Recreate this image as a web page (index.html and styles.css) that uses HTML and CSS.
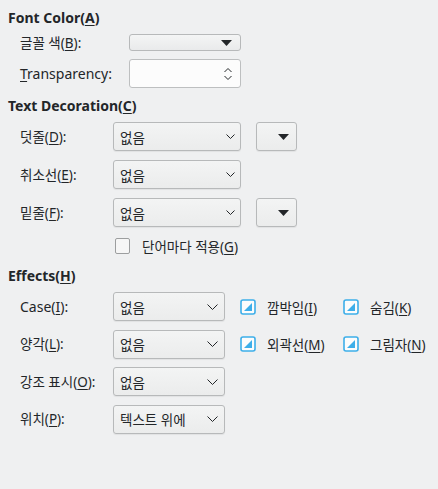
FILE: index.html
```html
<!DOCTYPE html>
<html lang="ko">
<head>
<meta charset="utf-8">
<link rel="stylesheet" href="styles.css">
</head>
<body>
<div class="page">
  <div class="title">Font Color(<u>A</u>)</div>
  <div class="grid grid-font">
    <div class="label ko">글꼴 색(<u>B</u>):</div>
    <div class="colorpick">
      <svg class="tri" width="11" height="6" viewBox="0 0 11 6"><polygon points="0,0 11,0 5.5,6" fill="#232629"/></svg>
    </div>
    <div class="label"><u>T</u>ransparency:</div>
    <div class="spin">
      <svg class="spinarrows" width="10" height="16" viewBox="0 0 10 16"><polyline points="1.5,6 5,2.5 8.5,6" fill="none" stroke="#232629" stroke-width="1"/><polyline points="1.5,10 5,13.5 8.5,10" fill="none" stroke="#232629" stroke-width="1"/></svg>
    </div>
  </div>

  <div class="title t2">Text Decoration(<u>C</u>)</div>
  <div class="grid grid-dec">
    <div class="label ko">덧줄(<u>D</u>):</div>
    <div class="combo wide ko"><span>없음</span><svg class="chev" width="9" height="5" viewBox="0 0 9 5"><polyline points="0.5,0.5 4.5,4.5 8.5,0.5" fill="none" stroke="#232629" stroke-width="1"/></svg></div>
    <div class="colorbtn"><svg width="11" height="6" viewBox="0 0 11 6"><polygon points="0,0 11,0 5.5,6" fill="#232629"/></svg></div>

    <div class="label ko">취소선(<u>E</u>):</div>
    <div class="combo wide ko"><span>없음</span><svg class="chev" width="9" height="5" viewBox="0 0 9 5"><polyline points="0.5,0.5 4.5,4.5 8.5,0.5" fill="none" stroke="#232629" stroke-width="1"/></svg></div>
    <div></div>

    <div class="label ko">밑줄(<u>F</u>):</div>
    <div class="combo wide ko"><span>없음</span><svg class="chev" width="9" height="5" viewBox="0 0 9 5"><polyline points="0.5,0.5 4.5,4.5 8.5,0.5" fill="none" stroke="#232629" stroke-width="1"/></svg></div>
    <div class="colorbtn"><svg width="11" height="6" viewBox="0 0 11 6"><polygon points="0,0 11,0 5.5,6" fill="#232629"/></svg></div>

    <div></div>
    <div class="check-row ko"><span class="box"></span><span>단어마다 적용(<u>G</u>)</span></div>
  </div>

  <div class="title t3">Effects(<u>H</u>)</div>
  <div class="grid grid-eff">
    <div class="label">Case(<u>I</u>):</div>
    <div class="combo ko"><span>없음</span><svg class="chev" width="11" height="6" viewBox="0 0 11 6"><polyline points="0.5,0.5 5.5,5.5 10.5,0.5" fill="none" stroke="#232629" stroke-width="1"/></svg></div>
    <div class="cb ko"><svg width="16" height="16" viewBox="0 0 16 16"><rect x="1" y="1" width="14" height="14" rx="2" fill="#fcfcfc" stroke="#3daee9" stroke-width="1.6"/><polygon points="12,4 12,12 4,12" fill="#3daee9"/></svg><span>깜박임(<u>I</u>)</span></div>
    <div class="cb ko"><svg width="16" height="16" viewBox="0 0 16 16"><rect x="1" y="1" width="14" height="14" rx="2" fill="#fcfcfc" stroke="#3daee9" stroke-width="1.6"/><polygon points="12,4 12,12 4,12" fill="#3daee9"/></svg><span>숨김(<u>K</u>)</span></div>

    <div class="label ko">양각(<u>L</u>):</div>
    <div class="combo ko"><span>없음</span><svg class="chev" width="11" height="6" viewBox="0 0 11 6"><polyline points="0.5,0.5 5.5,5.5 10.5,0.5" fill="none" stroke="#232629" stroke-width="1"/></svg></div>
    <div class="cb ko"><svg width="16" height="16" viewBox="0 0 16 16"><rect x="1" y="1" width="14" height="14" rx="2" fill="#fcfcfc" stroke="#3daee9" stroke-width="1.6"/><polygon points="12,4 12,12 4,12" fill="#3daee9"/></svg><span>외곽선(<u>M</u>)</span></div>
    <div class="cb ko"><svg width="16" height="16" viewBox="0 0 16 16"><rect x="1" y="1" width="14" height="14" rx="2" fill="#fcfcfc" stroke="#3daee9" stroke-width="1.6"/><polygon points="12,4 12,12 4,12" fill="#3daee9"/></svg><span>그림자(<u>N</u>)</span></div>

    <div class="label ko">강조 표시(<u>O</u>):</div>
    <div class="combo ko"><span>없음</span><svg class="chev" width="11" height="6" viewBox="0 0 11 6"><polyline points="0.5,0.5 5.5,5.5 10.5,0.5" fill="none" stroke="#232629" stroke-width="1"/></svg></div>
    <div></div><div></div>

    <div class="label ko">위치(<u>P</u>):</div>
    <div class="combo ko"><span>텍스트 위에</span><svg class="chev" width="11" height="6" viewBox="0 0 11 6"><polyline points="0.5,0.5 5.5,5.5 10.5,0.5" fill="none" stroke="#232629" stroke-width="1"/></svg></div>
    <div></div><div></div>
  </div>
</div>
</body>
</html>
```

FILE: styles.css
```css
html, body {
  margin: 0;
  padding: 0;
  background: #eff0f1;
}
body {
  font-family: "Noto Sans", "Noto Sans CJK KR", sans-serif;
  font-size: 14px;
  color: #232629;
  width: 438px;
  height: 489px;
  overflow: hidden;
}
.ko { font-size: 13.5px; }
u { text-decoration-thickness: 1px; text-underline-offset: 2px; }
.page {
  padding: 8px 0 0 8px;
}
.title {
  font-weight: bold;
  height: 20px;
  line-height: 20px;
}
.t2 { margin-top: 8px; }
.t3 { margin-top: 10px; }
.grid {
  display: grid;
  margin-top: 6px;
  padding-left: 12px;
  align-items: center;
}
.grid-font {
  grid-template-columns: 109px 112px;
  grid-template-rows: 17px 29px;
  row-gap: 8px;
}
.grid-dec {
  grid-template-columns: 93px 128px 56px;
  grid-template-rows: 29px 29px 29px 20px;
  row-gap: 9px;
}
.grid-dec .colorbtn { margin-left: 15px; }
.grid-eff {
  grid-template-columns: 93px 112px 118px auto;
  grid-template-rows: 29px 29px 29px 29px;
  row-gap: 8.5px;
}
.label {
  white-space: nowrap;
  line-height: 18px;
}
.colorpick {
  height: 17px;
  box-sizing: border-box;
  border: 1px solid #b7b9ba;
  border-radius: 3px;
  background: linear-gradient(#f4f5f5, #e9eaeb);
  display: flex;
  justify-content: flex-end;
  align-items: center;
  padding-right: 8px;
}
.spin {
  height: 29px;
  box-sizing: border-box;
  border: 1px solid #bdbfc0;
  border-radius: 3px;
  background: #fcfcfc;
  display: flex;
  justify-content: flex-end;
  align-items: center;
  padding-right: 7px;
}
.combo {
  height: 29px;
  box-sizing: border-box;
  border: 1px solid #b7b9ba;
  border-radius: 3px;
  background: linear-gradient(#f3f4f4, #ebecec);
  box-shadow: 0 1px 1px rgba(0,0,0,0.06);
  display: flex;
  justify-content: space-between;
  align-items: center;
  padding: 0 6px 0 6px;
  white-space: nowrap;
}
.combo.wide { padding-right: 5px; }
.colorbtn {
  height: 29px;
  width: 41px;
  box-sizing: border-box;
  border: 1px solid #b7b9ba;
  border-radius: 3px;
  background: linear-gradient(#f3f4f4, #ebecec);
  box-shadow: 0 1px 1px rgba(0,0,0,0.06);
  display: flex;
  justify-content: flex-end;
  align-items: center;
  padding-right: 7px;
}
.check-row {
  grid-column: 2 / 4;
  display: flex;
  align-items: center;
  gap: 12px;
  padding-left: 2px;
  white-space: nowrap;
}
.box {
  width: 13px;
  height: 14px;
  border: 1px solid #9c9e9f;
  border-radius: 2px;
  background: #f6f6f6;
}
.cb {
  display: flex;
  align-items: center;
  gap: 11px;
  white-space: nowrap;
  padding-left: 15px;
}
.cb svg { flex: none; }
.grid-eff .cb + .cb { padding-left: 0; }
```
